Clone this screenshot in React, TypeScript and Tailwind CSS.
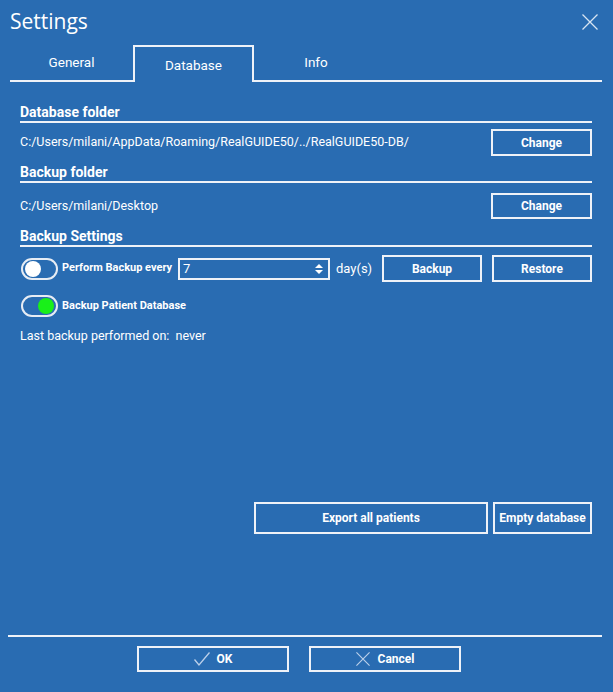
const font = { fontFamily: "Roboto, 'Liberation Sans', sans-serif" }

function Toggle({ on }: { on?: boolean }) {
  return (
    <div className="w-[37px] h-[22px] rounded-full border-2 border-[#e6ecf4] flex items-center px-[2px] shrink-0">
      <div
        className={
          on
            ? "ml-auto w-[16px] h-[16px] rounded-full bg-[#19f019]"
            : "w-[16px] h-[16px] rounded-full bg-white"
        }
      />
    </div>
  )
}

function Btn({ label, className }: { label: string; className: string }) {
  return (
    <button className={"border-2 border-[#eef2f8] text-white text-[12px] font-bold flex items-center justify-center whitespace-nowrap shrink-0 " + className}>
      {label}
    </button>
  )
}

function Section({ title, className }: { title: string; className: string }) {
  return (
    <div className={"border-b-2 border-[#eef2f8] " + className}>
      <h3 className="text-white text-[14px] font-bold leading-[18px]">{title}</h3>
    </div>
  )
}

function Cross({ size, className }: { size: number; className: string }) {
  return (
    <svg width={size} height={size} viewBox="0 0 16 16" className={className}>
      <path d="M0.5 0.5 L15.5 15.5 M15.5 0.5 L0.5 15.5" stroke="currentColor" strokeWidth="1.3" fill="none" />
    </svg>
  )
}

export default function App() {
  return (
    <div className="w-[613px] h-[692px] bg-[#296cb2] text-white flex flex-col" style={font}>
      {/* Title bar */}
      <div className="flex items-center justify-between pl-[10px] pr-[15px] h-[45px]">
        <span className="text-[21px] leading-none mb-[2px]" style={{ fontFamily: "'Open Sans', Roboto, sans-serif" }}>Settings</span>
        <Cross size={16} className="text-[#d8e4f2] mb-[2px]" />
      </div>

      {/* Tabs */}
      <div className="ml-[10px] mr-[11px] flex h-[37px] border-b-2 border-[#eef2f8] text-[13.5px]">
        <div className="w-[123px] flex items-center justify-center">General</div>
        <div className="w-[121px] flex items-center justify-center border-2 border-b-0 border-[#eef2f8] mb-[-2px] bg-[#296cb2] pt-[2px]">
          Database
        </div>
        <div className="w-[124px] flex items-center justify-center">Info</div>
      </div>

      {/* Body */}
      <div className="flex-1 flex flex-col pl-[20px] pr-[21px] pt-[21px] text-[12.5px]">
        <Section title="Database folder" className="" />
        <div className="flex items-center justify-between mt-[6px] h-[27px]">
          <span className="whitespace-nowrap">C:/Users/milani/AppData/Roaming/RealGUIDE50/../RealGUIDE50-DB/</span>
          <Btn label="Change" className="w-[101px] h-[27px]" />
        </div>

        <Section title="Backup folder" className="mt-[7px]" />
        <div className="flex items-center justify-between mt-[10px] h-[26px]">
          <span className="whitespace-nowrap">C:/Users/milani/Desktop</span>
          <Btn label="Change" className="w-[101px] h-[26px]" />
        </div>

        <Section title="Backup Settings" className="mt-[8px]" />
        <div className="flex items-center mt-[8px] h-[27px]">
          <div className="ml-[1px]"><Toggle /></div>
          <span className="ml-[4px] w-[116px] text-[11px] font-bold whitespace-nowrap">Perform Backup every</span>
          <div className="w-[152px] h-[22px] border-2 border-[#eef2f8] flex items-center justify-between pl-[3px] pr-[5px] shrink-0">
            <span className="text-[13px]">7</span>
            <div className="flex flex-col items-center gap-[2px]">
              <div className="w-0 h-0 border-l-[4px] border-r-[4px] border-b-[4px] border-l-transparent border-r-transparent border-b-white" />
              <div className="w-0 h-0 border-l-[4px] border-r-[4px] border-t-[4px] border-l-transparent border-r-transparent border-t-white" />
            </div>
          </div>
          <span className="ml-[6px] w-[36px] text-[13px] whitespace-nowrap">day(s)</span>
          <Btn label="Backup" className="ml-[10px] w-[100px] h-[27px]" />
          <Btn label="Restore" className="ml-auto w-[100px] h-[27px]" />
        </div>

        <div className="flex items-center mt-[13px] h-[22px]">
          <div className="ml-[1px]"><Toggle on /></div>
          <span className="ml-[4px] text-[11px] font-bold whitespace-nowrap">Backup Patient Database</span>
        </div>

        <div className="mt-[11px] leading-[16px] whitespace-nowrap">Last backup performed on:&nbsp; never</div>

        <div className="flex justify-end gap-[5px] mt-[158px]">
          <Btn label="Export all patients" className="w-[234px] h-[32px]" />
          <Btn label="Empty database" className="w-[99px] h-[32px]" />
        </div>
      </div>

      {/* Footer */}
      <div className="ml-[8px] mr-[11px] border-t-2 border-[#eef2f8] h-[57px] flex items-start pl-[129px] pt-[9px] gap-[20px]">
        <button className="w-[152px] h-[26px] border-2 border-[#eef2f8] flex items-center justify-center gap-[7px] text-[12px] font-bold">
          <svg width="16" height="14" viewBox="0 0 16 14" className="text-[#bcd0ea]">
            <path d="M0.5 7.5 L5 13 L15.5 0.5" stroke="currentColor" strokeWidth="1.3" fill="none" />
          </svg>
          OK
        </button>
        <button className="w-[152px] h-[26px] border-2 border-[#eef2f8] flex items-center justify-center gap-[8px] text-[12px] font-bold">
          <Cross size={14} className="text-[#bcd0ea]" />
          Cancel
        </button>
      </div>
    </div>
  )
}
